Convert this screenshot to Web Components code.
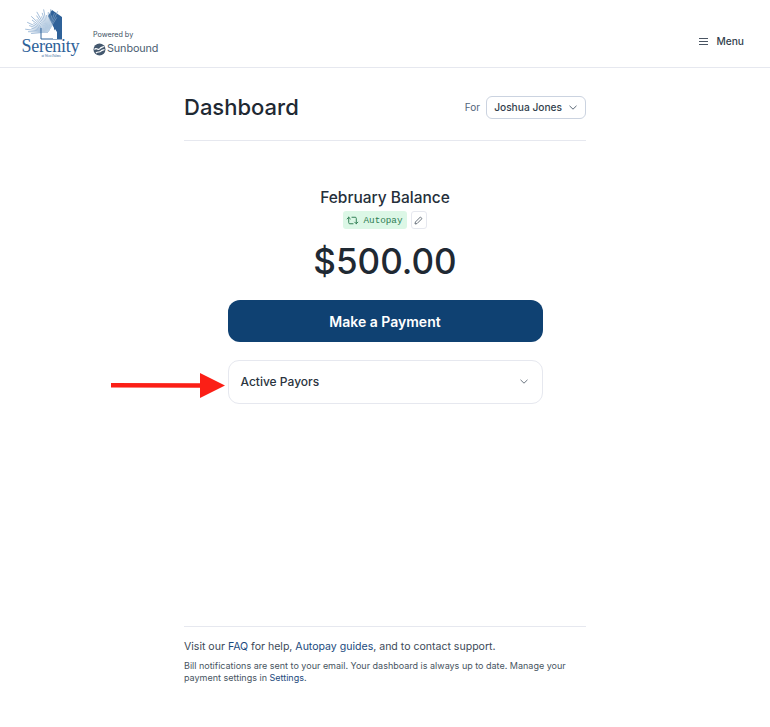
<!DOCTYPE html>
<html lang="en">
<head>
<meta charset="utf-8">
<title>Dashboard</title>
<style>
  html, body { margin: 0; background: #fff; }
  body { font-family: Inter, "Noto Sans", sans-serif; color: #1f2933; }
</style>
</head>
<body>
<app-shell>
  <site-header></site-header>
  <dash-head></dash-head>
  <balance-card></balance-card>
  <site-footer></site-footer>
</app-shell>

<script>
// palm fronds of the logo, fanned out from one point
function fronds(color, width) {
  let out = "";
  for (let i = 0; i < 22; i++) {
    const a = (-185 + i * 6) * Math.PI / 180;
    const len = 17 + (i % 3) * 3;
    const x = (27 + Math.cos(a) * len).toFixed(1);
    const y = (24 + Math.sin(a) * len).toFixed(1);
    out += `<path d="M27 24 L${x} ${y}" stroke="${color}" stroke-width="${width}"/>`;
  }
  return out;
}

class AppShell extends HTMLElement {
  constructor() {
    super();
    this.attachShadow({ mode: "open" });
    this.shadowRoot.innerHTML = `
    <style>
      :host { display: block; position: relative; height: 727px; overflow: hidden; }
      .arrow { position: absolute; left: 110px; top: 372px; }
    </style>
    <slot></slot>
    <svg class="arrow" width="116" height="28" viewBox="0 0 116 28">
      <path d="M1 11 L90 11.2 V1 L115 13.5 L90 26 V15.8 L1 15.6 Z" fill="#fb1f16"/>
    </svg>`;
  }
}

class SiteHeader extends HTMLElement {
  constructor() {
    super();
    this.attachShadow({ mode: "open" });
    this.shadowRoot.innerHTML = `
    <style>
      :host { display: flex; justify-content: space-between; align-items: stretch; height: 67px; border-bottom: 1px solid #e6e8ef; padding: 0 26px 0 21px; }
      .brand { display: flex; align-items: flex-start; gap: 13px; padding-top: 8px; }
      .logo { display: block; }
      .powered { display: flex; flex-direction: column; padding-top: 22px; color: #3d4f63; }
      .powered small { font-size: 7.2px; line-height: 10px; }
      .sun { display: flex; align-items: center; gap: 1px; font-size: 10.8px; line-height: 16px; margin-top: 1px; letter-spacing: -0.1px; color: #4a5d72; }
      .menu { display: flex; align-items: center; gap: 8px; font-size: 10.2px; font-weight: 500; color: #333f4d; padding-top: 15px; }
    </style>
    <div class="brand">
      <svg class="logo" width="59" height="49" viewBox="0 0 59 49">
        <defs><clipPath id="house"><path d="M20 14 L31 2 L41 9 V31 H20 Z"/></clipPath></defs>
        <g opacity=".8">${fronds("#5f8dbd", 0.7)}</g>
        <path d="M27 8 L31 2 L41 9 V31 H33 V20 Z" fill="#2f6299"/>
        <g clip-path="url(#house)" opacity=".7">${fronds("#dbe6f1", 0.5)}</g>
        <path d="M20 20 V31 H41" fill="none" stroke="#2f6299" stroke-width="1"/>
        <path d="M32 31 V24 L34 21 L36 24 V31 Z" fill="#fff"/>
        <text x="29.5" y="44" text-anchor="middle" font-family="Liberation Serif, serif" font-size="18" fill="#2f6299" textLength="58">Serenity</text>
        <text x="30" y="48.8" text-anchor="middle" font-family="Liberation Serif, serif" font-size="3.4" fill="#2f6299">at West Palms</text>
      </svg>
      <div class="powered">
        <small>Powered by</small>
        <div class="sun">
          <svg width="13" height="13" viewBox="0 0 13 13">
            <circle cx="6.5" cy="6.5" r="6" fill="#44586e"/>
            <path d="M1.5 6.5 C3.5 3.5 5 8 6.5 6 C8 4 9 4.5 11 3.5 M3 10 C5 8 6.5 10 8 8 C9 7 10 7 11.5 6.5" fill="none" stroke="#fff" stroke-width="1.2"/>
          </svg>
          <span>Sunbound</span>
        </div>
      </div>
    </div>
    <div class="menu">
      <svg width="9" height="7" viewBox="0 0 9 7"><path d="M0 .5H9M0 3.5H9M0 6.5H9" stroke="#4a5563" stroke-width="1"/></svg>
      <span>Menu</span>
    </div>`;
  }
}

class DashHead extends HTMLElement {
  constructor() {
    super();
    this.attachShadow({ mode: "open" });
    this.shadowRoot.innerHTML = `
    <style>
      :host { display: flex; justify-content: space-between; align-items: center; width: 402px; height: 72px; margin: 0 auto; border-bottom: 1px solid #e6e8ef; }
      .row { display: flex; justify-content: space-between; align-items: center; width: 100%; padding-top: 6px; }
      h1 { margin: 0; font-size: 22px; line-height: 28px; font-weight: 500; color: #1f2933; }
      .who { display: flex; align-items: center; gap: 6px; font-size: 10px; color: #51647a; }
      .select { display: flex; align-items: center; gap: 7px; height: 21px; padding: 0 8px 0 7px; border: 1px solid #cbd3e0; border-radius: 6px; font-size: 10.2px; font-weight: 500; color: #333f4d; }
    </style>
    <div class="row">
      <h1>Dashboard</h1>
      <div class="who">
        <span>For</span>
        <div class="select">
          <span>Joshua Jones</span>
          <svg width="8" height="5" viewBox="0 0 8 5"><path d="M.5 .8 L4 4.2 L7.5 .8" fill="none" stroke="#5b6876"/></svg>
        </div>
      </div>
    </div>`;
  }
}

class BalanceCard extends HTMLElement {
  constructor() {
    super();
    this.attachShadow({ mode: "open" });
    this.shadowRoot.innerHTML = `
    <style>
      :host { display: flex; flex-direction: column; align-items: center; width: 315px; margin: 0 auto; padding-top: 47px; }
      h2 { margin: 0; font-size: 15.5px; line-height: 20px; font-weight: 500; color: #252f3a; }
      .status { display: flex; align-items: center; gap: 4px; margin-top: 3px; }
      .badge { display: flex; align-items: center; gap: 4px; height: 18px; padding: 0 4px 0 3px; background: #dcf7e6; border-radius: 3px; font-family: "Liberation Mono", monospace; font-size: 9.3px; color: #2f7d53; }
      .edit { display: flex; align-items: center; justify-content: center; width: 14px; height: 16px; border: 1px solid #e6e8ef; border-radius: 3px; }
      .amount { margin-top: 9px; font-size: 35px; line-height: 46px; font-weight: 500; color: #1f2933; }
      button { display: block; width: 100%; height: 42px; margin-top: 16px; border: 0; border-radius: 12px; background: #0f4172; color: #fff; font: 600 14px Inter, sans-serif; }
      .payors { display: flex; justify-content: space-between; align-items: center; width: 100%; box-sizing: border-box; height: 44px; margin-top: 18px; padding: 0 14px 2px 12px; border: 1px solid #e6e8ef; border-radius: 11px; font-size: 12px; font-weight: 500; color: #2a3440; }
    </style>
    <h2>February Balance</h2>
    <div class="status">
      <span class="badge">
        <svg width="13" height="13" viewBox="0 0 24 24" fill="none" stroke="#2f7d53" stroke-width="1.8" stroke-linecap="round" stroke-linejoin="round">
          <path d="m2 9 3-3 3 3"/><path d="M13 18H7a2 2 0 0 1-2-2V6"/><path d="m22 15-3 3-3-3"/><path d="M11 6h6a2 2 0 0 1 2 2v10"/>
        </svg>
        Autopay
      </span>
      <span class="edit">
        <svg width="9" height="9" viewBox="0 0 9 9" fill="none" stroke="#59646f" stroke-width=".9"><path d="M1 8 L1.4 6 L6.4 1 L8 2.6 L3 7.6 Z"/></svg>
      </span>
    </div>
    <div class="amount">$500.00</div>
    <button>Make a Payment</button>
    <div class="payors">
      <span>Active Payors</span>
      <svg width="8" height="5" viewBox="0 0 8 5"><path d="M.5 .8 L4 4.2 L7.5 .8" fill="none" stroke="#6b7580"/></svg>
    </div>`;
  }
}

class SiteFooter extends HTMLElement {
  constructor() {
    super();
    this.attachShadow({ mode: "open" });
    this.shadowRoot.innerHTML = `
    <style>
      :host { display: block; width: 402px; margin: 222px auto 0; padding-top: 12px; border-top: 1px solid #e6e8ef; color: #3d4a58; }
      p { margin: 0; }
      .help { font-size: 10.55px; line-height: 16px; }
      .note { font-size: 9px; line-height: 12px; margin-top: 5px; color: #48555f; }
      a { color: #1b4a7d; text-decoration: none; }
    </style>
    <p class="help">Visit our <a href="#">FAQ</a> for help, <a href="#">Autopay guides</a>, and to contact support.</p>
    <p class="note">Bill notifications are sent to your email. Your dashboard is always up to date. Manage your payment settings in <a href="#">Settings</a>.</p>`;
  }
}

customElements.define("app-shell", AppShell);
customElements.define("site-header", SiteHeader);
customElements.define("dash-head", DashHead);
customElements.define("balance-card", BalanceCard);
customElements.define("site-footer", SiteFooter);
</script>
</body>
</html>
